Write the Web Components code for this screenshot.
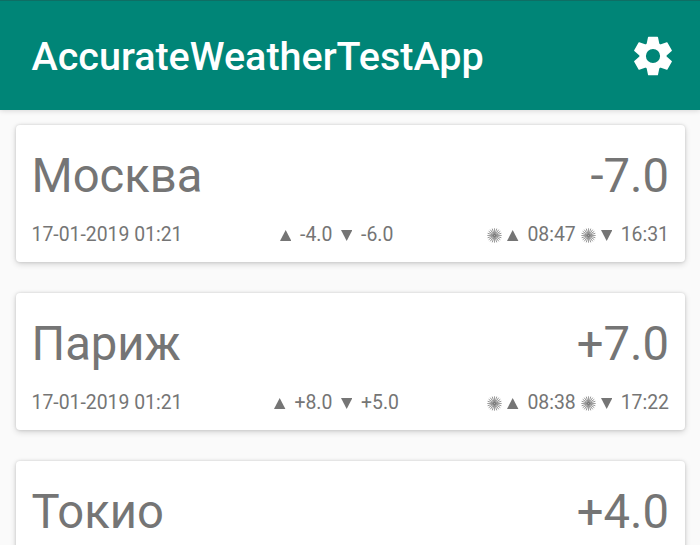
<!DOCTYPE html>
<html lang="ru"><head><meta charset="utf-8"><title>AccurateWeatherTestApp</title>
<style>
html,body{margin:0;height:100%;overflow:hidden;background:#fafafa;font-family:Roboto,"Noto Sans",sans-serif}
</style></head><body>
<weather-app></weather-app>
<script>
customElements.define('sun-icon', class extends HTMLElement {
  constructor(){super();
    let rays='';
    for(let i=0;i<20;i++) rays+=`<path d="M7.5 7V.3" transform="rotate(${i*18} 7.5 7.5)"/>`;
    this.attachShadow({mode:'open'}).innerHTML=`<style>:host{display:block;width:15px;height:15px}svg{display:block}</style>
    <svg width="15" height="15" viewBox="0 0 15 15" fill="none" stroke="currentColor" stroke-width=".7">${rays}</svg>`;}
});
customElements.define('tri-icon', class extends HTMLElement {
  constructor(){super();
    const d=this.hasAttribute('down')?'M0 0H11.4L5.7 11Z':'M0 11H11.4L5.7 0Z';
    this.attachShadow({mode:'open'}).innerHTML=`<style>:host{display:block;width:11.4px;height:11px}svg{display:block}</style>
    <svg width="11.4" height="11" viewBox="0 0 11.4 11" fill="currentColor"><path d="${d}"/></svg>`;}
});
customElements.define('gear-icon', class extends HTMLElement {
  constructor(){super();
    let teeth='';
    for(let i=0;i<6;i++) teeth+=`<path d="M-6.4-12-5-18.7q.1-.5.6-.5h8.8q.5 0 .6.5L6.4-12Z" transform="rotate(${i*60})"/>`;
    this.attachShadow({mode:'open'}).innerHTML=`<style>:host{display:block;width:40px;height:40px}svg{display:block}</style>
    <svg width="40" height="40" viewBox="-20 -20 40 40" fill="currentColor">${teeth}<circle r="10.4" fill="none" stroke="currentColor" stroke-width="6.6"/></svg>`;}
});
customElements.define('app-bar', class extends HTMLElement {
  constructor(){super();
    this.attachShadow({mode:'open'}).innerHTML=`<style>
    :host{display:flex;justify-content:space-between;box-sizing:border-box;height:110px;padding:31px 27px 0 31.5px;background:#008577;color:#fff;border-top:1px solid #0f6e64;box-shadow:0 1px 5px rgba(0,0,0,.14)}
    .t{font-size:39.5px;font-weight:500;line-height:49px;white-space:nowrap}
    gear-icon{margin-top:3.6px}</style>
    <div class="t"><slot></slot></div><gear-icon></gear-icon>`;}
});
customElements.define('city-card', class extends HTMLElement {
  constructor(){super();
    const a=n=>this.getAttribute(n);
    const details=a('hi')?`<div class="bot"><span>17-01-2019 01:21</span>
    <div class="g"><tri-icon></tri-icon><span>${a('hi')}</span><tri-icon down></tri-icon><span>${a('lo')}</span></div>
    <div class="g s"><sun-icon></sun-icon><tri-icon></tri-icon><span class="time">${a('rise')}</span><sun-icon></sun-icon><tri-icon down></tri-icon><span class="time">${a('set')}</span></div></div>`:'';
    this.attachShadow({mode:'open'}).innerHTML=`<style>
    :host{display:block;box-sizing:border-box;height:137px;padding:18px 16px 0 15.5px;background:#fff;border-radius:4px;color:#757575;box-shadow:0 2px 6px rgba(0,0,0,.16),0 0 3px rgba(0,0,0,.14)}
    .top{display:flex;justify-content:space-between;font-size:47.2px;line-height:66px}
    .bot{display:flex;justify-content:space-between;font-size:19.4px;line-height:24px;margin-top:14px;white-space:nowrap}
    .g{display:flex;align-items:center;gap:8.7px;padding-left:3.4px}.s{gap:5px;padding:0}.time{padding-left:3.6px}
    tri-icon,sun-icon{margin-bottom:.6px}
    span{white-space:nowrap}</style>
    <div class="top"><span><slot></slot></span><span>${a('temp')}</span></div>${details}`;}
});
customElements.define('weather-app', class extends HTMLElement {
  constructor(){super();
    this.attachShadow({mode:'open'}).innerHTML=`<style>:host{display:block;height:545px;overflow:hidden}
    main{display:flex;flex-direction:column;gap:31px;padding:15.4px 15px 0 16px}</style>
    <app-bar>AccurateWeatherTestApp</app-bar>
    <main><city-card temp="-7.0" hi="-4.0" lo="-6.0" rise="08:47" set="16:31">Москва</city-card>
    <city-card temp="+7.0" hi="+8.0" lo="+5.0" rise="08:38" set="17:22">Париж</city-card>
    <city-card temp="+4.0">Токио</city-card></main>`;}
});
</script></body></html>
